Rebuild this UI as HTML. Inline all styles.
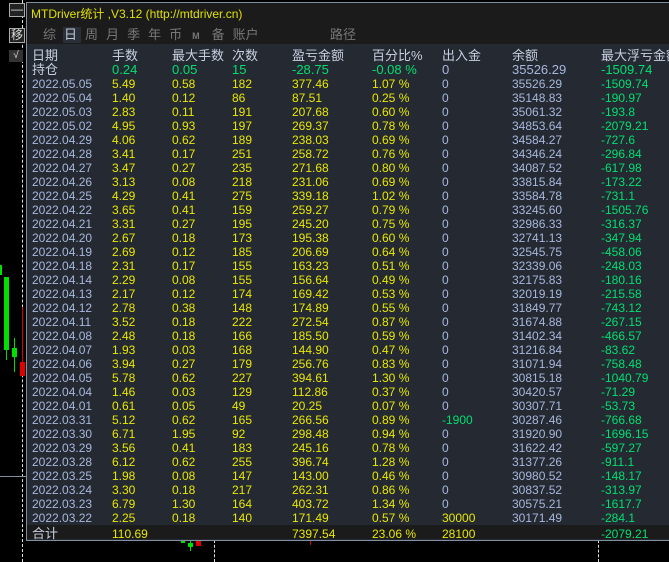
<!DOCTYPE html><html><head><meta charset="utf-8"><style>
body{margin:0;width:669px;height:562px;background:#000;overflow:hidden;position:relative;font-family:"Liberation Sans","Noto Sans CJK SC",sans-serif;font-size:12px}
.a{position:absolute}
.row{position:absolute;left:32px;height:14px;line-height:14px;white-space:nowrap}
.row span{position:absolute;top:0}
.d{color:#a8b8dc}.y{color:#e8e800}.g{color:#00e070}.b{color:#a8b8dc}
</style></head><body>
<!-- left chart -->
<div class="a" style="left:22px;top:0;height:562px;border-left:1px dashed #ddd"></div>
<div class="a" style="left:0;top:476px;width:26px;height:1px;background:#8090a0"></div>
<div class="a" style="left:0;top:265px;width:2px;height:10px;background:#00e000"></div>
<div class="a" style="left:6px;top:277px;width:1px;height:83px;background:#00e000"></div>
<div class="a" style="left:4px;top:277px;width:5px;height:73px;background:#00e000"></div>
<div class="a" style="left:14px;top:338px;width:1px;height:34px;background:#00e000"></div>
<div class="a" style="left:12px;top:348px;width:5px;height:9px;background:#00e000"></div>
<div class="a" style="left:22px;top:307px;width:1px;height:60px;background:#e00000"></div>
<div class="a" style="left:20px;top:362px;width:5px;height:14px;background:#e00000"></div>
<div class="a" style="left:181px;top:540px;width:4px;height:3px;background:#00e000"></div>
<div class="a" style="left:190px;top:540px;width:1px;height:11px;background:#00e000"></div>
<div class="a" style="left:188px;top:543px;width:5px;height:4px;background:#00e000"></div>
<div class="a" style="left:196px;top:540px;width:5px;height:6px;background:#e00000"></div>
<div class="a" style="left:214px;top:540px;height:22px;border-left:1px dashed #ddd"></div>
<div class="a" style="left:310px;top:540px;width:1px;height:5px;background:#e00000"></div>
<div class="a" style="left:598px;top:540px;height:22px;border-left:1px dashed #ddd"></div>
<!-- buttons -->
<div class="a" style="left:9px;top:3px;width:14px;height:12px;border:1px solid #aaa;background:#222;color:#ddd;text-align:center;line-height:11px">—</div>
<div class="a" style="left:9px;top:28px;width:14px;height:13px;border:1px solid #aaa;background:#222;color:#ddd;font-size:12px;line-height:13px;text-align:center">移</div>
<div class="a" style="left:9px;top:50px;width:14px;height:12px;background:#333;color:#ddd;font-size:10px;line-height:12px;text-align:center">√</div>
<!-- panel -->
<div class="a" style="left:26px;top:2px;width:643px;height:537px;border-left:1px solid #8090a0;border-top:1px solid #8090a0;border-bottom:1px solid #8090a0;background:#242932"></div>
<div class="a" style="left:27px;top:3px;width:642px;height:41px;background:#1b1b1b"></div>
<div class="a" style="left:31px;top:6px;color:#e0e000;font-size:12px;line-height:16px">MTDriver统计 ,V3.12 (http://mtdriver.cn)</div>
<div class="a" style="left:63px;top:27px;width:18px;height:16px;background:#2a2f38"></div>
<div class="a" style="left:43px;top:27px;color:#777;font-size:13px;line-height:16px;white-space:nowrap;word-spacing:0"><span style="margin-right:8px">综</span><span style="color:#c0c8d8;margin-right:8px">日</span><span style="margin-right:8px">周</span><span style="margin-right:8px">月</span><span style="margin-right:8px">季</span><span style="margin-right:8px">年</span><span style="margin-right:10px">币</span><span style="font-size:9px;font-weight:bold;margin-right:12px">M</span><span style="margin-right:8px">备</span><span>账户</span></div>
<div class="a" style="left:330px;top:27px;color:#777;font-size:13px;line-height:16px">路径</div>
<div class="a" style="left:27px;top:525px;width:642px;height:14px;background:#1b1b1b"></div>
<div id="t"></div>
<div class="row" style="top:49px;color:#c8d0e0;font-size:13px"><span style="left:0">日期</span><span style="left:80px">手数</span><span style="left:140px">最大手数</span><span style="left:200px">次数</span><span style="left:260px">盈亏金额</span><span style="left:340px">百分比%</span><span style="left:410px">出入金</span><span style="left:480px">余额</span><span style="left:569px">最大浮亏金额</span></div>
<div class="row" style="top:63px;font-size:13px"><span style="left:0;color:#c8d0e0">持仓</span><span class="g" style="left:80px">0.24</span><span class="g" style="left:140px">0.05</span><span class="g" style="left:200px">15</span><span class="g" style="left:260px">-28.75</span><span class="g" style="left:340px">-0.08 %</span><span class="b" style="left:410px">0</span><span class="b" style="left:480px">35526.29</span><span class="g" style="left:569px">-1509.74</span></div>
<div id="rows"></div>
<div class="row" style="top:527px"><span style="left:0;color:#c8d0e0;font-size:13px">合计</span><span class="y" style="left:80px">110.69</span><span class="y" style="left:260px">7397.54</span><span class="y" style="left:340px">23.06 %</span><span class="y" style="left:410px">28100</span><span class="g" style="left:569px">-2079.21</span></div>
<script>
var D=`05.05 5.49 0.58 182 377.46 1.07 0 35526.29 -1509.74
05.04 1.40 0.12 86 87.51 0.25 0 35148.83 -190.97
05.03 2.83 0.11 191 207.68 0.60 0 35061.32 -193.8
05.02 4.95 0.93 197 269.37 0.78 0 34853.64 -2079.21
04.29 4.06 0.62 189 238.03 0.69 0 34584.27 -727.6
04.28 3.41 0.17 251 258.72 0.76 0 34346.24 -296.84
04.27 3.47 0.27 235 271.68 0.80 0 34087.52 -617.98
04.26 3.13 0.08 218 231.06 0.69 0 33815.84 -173.22
04.25 4.29 0.41 275 339.18 1.02 0 33584.78 -731.1
04.22 3.65 0.41 159 259.27 0.79 0 33245.60 -1505.76
04.21 3.31 0.27 195 245.20 0.75 0 32986.33 -316.37
04.20 2.67 0.18 173 195.38 0.60 0 32741.13 -347.94
04.19 2.69 0.12 185 206.69 0.64 0 32545.75 -458.06
04.18 2.31 0.17 155 163.23 0.51 0 32339.06 -248.03
04.14 2.29 0.08 155 156.64 0.49 0 32175.83 -180.16
04.13 2.17 0.12 174 169.42 0.53 0 32019.19 -215.58
04.12 2.78 0.38 148 174.89 0.55 0 31849.77 -743.12
04.11 3.52 0.18 222 272.54 0.87 0 31674.88 -267.15
04.08 2.48 0.18 166 185.50 0.59 0 31402.34 -466.57
04.07 1.93 0.03 168 144.90 0.47 0 31216.84 -83.62
04.06 3.94 0.27 179 256.76 0.83 0 31071.94 -758.48
04.05 5.78 0.62 227 394.61 1.30 0 30815.18 -1040.79
04.04 1.46 0.03 129 112.86 0.37 0 30420.57 -71.29
04.01 0.61 0.05 49 20.25 0.07 0 30307.71 -53.73
03.31 5.12 0.62 165 266.56 0.89 -1900 30287.46 -766.68
03.30 6.71 1.95 92 298.48 0.94 0 31920.90 -1696.15
03.29 3.56 0.41 183 245.16 0.78 0 31622.42 -597.27
03.28 6.12 0.62 255 396.74 1.28 0 31377.26 -911.1
03.25 1.98 0.08 147 143.00 0.46 0 30980.52 -148.17
03.24 3.30 0.18 217 262.31 0.86 0 30837.52 -313.97
03.23 6.79 1.30 164 403.72 1.34 0 30575.21 -1617.7
03.22 2.25 0.18 140 171.49 0.57 30000 30171.49 -284.1`.split("\n");
var L=[0,80,140,200,260,340,410,480,569],h="";
D.forEach(function(r,i){var c=r.split(" ");c[0]="2022."+c[0];c[5]+=" %";
h+='<div class="row" style="top:'+(77+i*14)+'px">';
c.forEach(function(v,j){var k=j==0||j==7?"d":j==8?"g":j==6?(v=="0"?"b":v[0]=="-"?"g":"y"):"y";
h+='<span class="'+k+'" style="left:'+L[j]+'px">'+v+'</span>';});h+='</div>';});
document.getElementById("rows").innerHTML=h;
</script>
</body></html>
